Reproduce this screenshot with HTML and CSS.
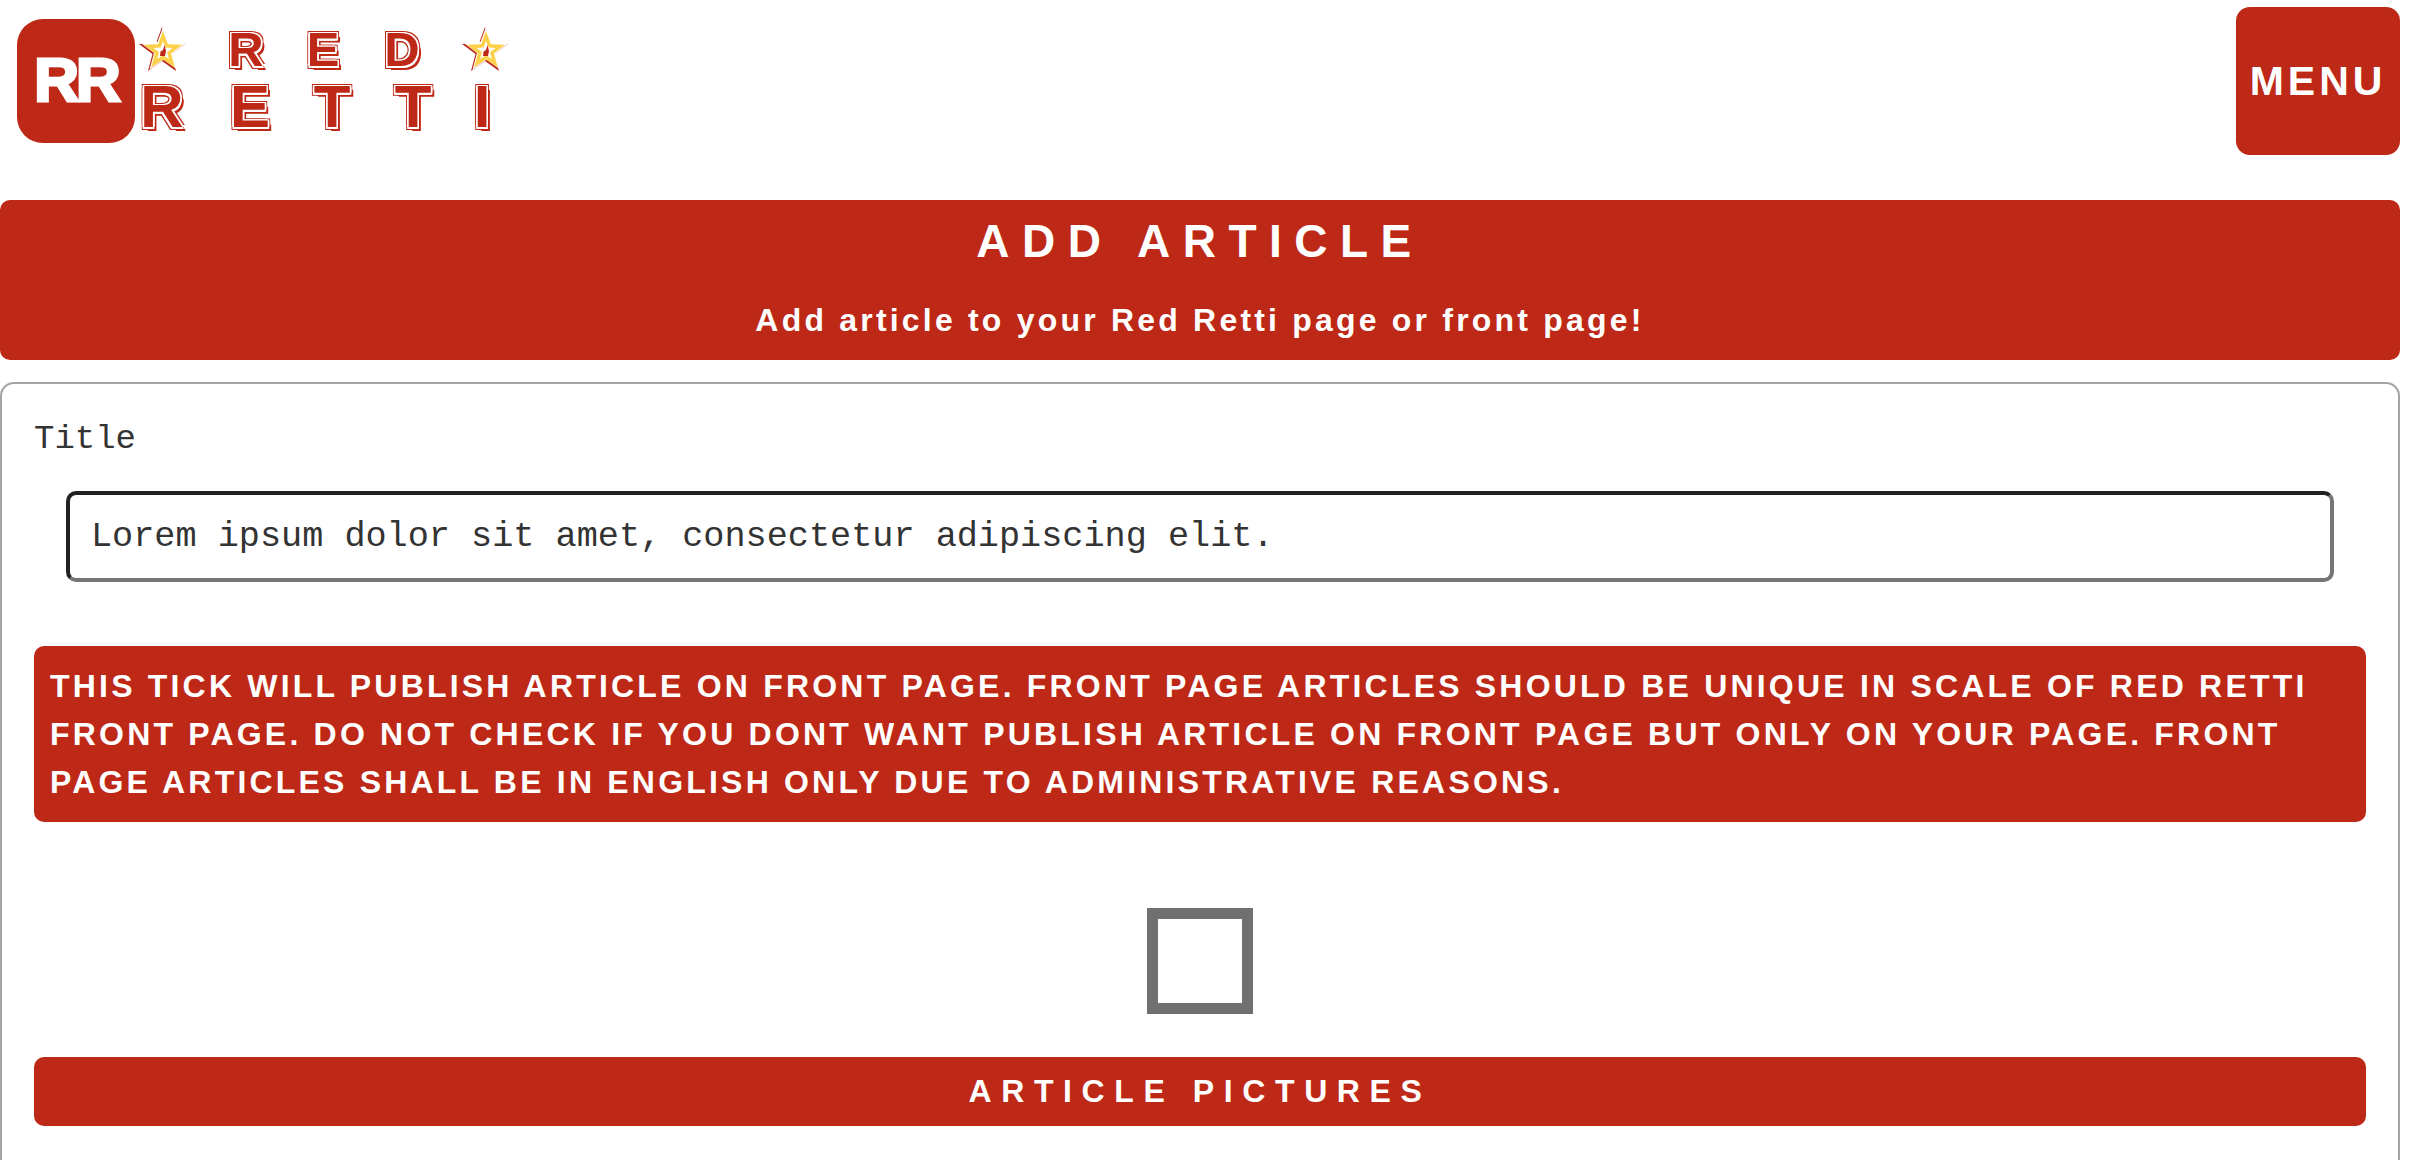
FILE: index.html
```html
<!DOCTYPE html>
<html>
<head>
    <meta charset="UTF-8">
    <meta name="viewport" content="width=device-width, initial-scale=1.0">
    <title>Red Retti - Add article</title>
    <link rel="stylesheet" href="styles.css">
</head>
<body>
    <svg class="defs" width="0" height="0">
        <symbol id="star" viewBox="0 0 50 50">
            <polygon points="25,3 30.9,18.9 48,20 34.5,30.1 39,47 25,37 11,47 15.5,30.1 2,20 19.1,18.9" fill="#be2816"/>
            <polygon points="25,3 30.9,18.9 48,20 34.5,30.1 39,47 25,37 11,47 15.5,30.1 2,20 19.1,18.9" fill="#fff" transform="translate(1.5 -1.2)"/>
            <polygon points="26,7 30.9,20.2 45,20.8 34,29.6 37.8,43.2 26,35.4 14.2,43.2 18,29.6 7,20.8 21.1,20.2" fill="#fdd04a"/>
            <polygon points="26,17 28.5,23.6 35.5,23.9 30,28.3 31.9,35.1 26,31.2 20.1,35.1 22,28.3 16.5,23.9 23.5,23.6" fill="#fff"/>
            <path d="M27.5 21 L29 27 L28 32 L23 32 L23.5 27.5 L26 26 Z" fill="#be2816"/>
        </symbol>
    </svg>

    <header class="topbar">
        <div class="logo">
            <div class="logo-box"><span>RR</span></div>
            <div class="logo-name">
                <div class="name-row row-red">
                    <svg class="star"><use href="#star"/></svg>
                    <span class="small">R</span>
                    <span class="small">E</span>
                    <span class="small">D</span>
                    <svg class="star"><use href="#star"/></svg>
                </div>
                <div class="name-row row-retti">
                    <span class="big">R</span>
                    <span class="big">E</span>
                    <span class="big">T</span>
                    <span class="big">T</span>
                    <span class="big">I</span>
                </div>
            </div>
        </div>
        <button class="menu-btn">MENU</button>
    </header>

    <section class="page-head">
        <h1>ADD ARTICLE</h1>
        <p>Add article to your Red Retti page or front page!</p>
    </section>

    <form class="panel">
        <label class="field-label" for="title">Title</label>
        <input class="title-input" id="title" type="text" value="Lorem ipsum dolor sit amet, consectetur adipiscing elit.">
        <div class="notice">THIS TICK WILL PUBLISH ARTICLE ON FRONT PAGE. FRONT PAGE ARTICLES SHOULD BE UNIQUE IN SCALE OF RED RETTI FRONT PAGE. DO NOT CHECK IF YOU DONT WANT PUBLISH ARTICLE ON FRONT PAGE BUT ONLY ON YOUR PAGE. FRONT PAGE ARTICLES SHALL BE IN ENGLISH ONLY DUE TO ADMINISTRATIVE REASONS.</div>
        <div class="tick-row"><span class="tick"></span></div>
        <h2 class="section-bar">ARTICLE PICTURES</h2>
    </form>
</body>
</html>
```

FILE: styles.css
```css
html, body {
    height: 1160px;
    overflow: hidden;
}

body {
    margin: 0;
    padding-right: 12px;
    background-color: #fff;
    font-family: "Liberation Sans", Arial, sans-serif;
    color: #fff;
}

.defs {
    position: absolute;
}

.topbar {
    display: flex;
    justify-content: space-between;
    align-items: flex-start;
    height: 200px;
    box-sizing: border-box;
    padding-top: 7px;
}

.logo {
    display: flex;
    margin: 12px 0 0 17px;
}

.logo-box {
    display: flex;
    align-items: center;
    justify-content: center;
    width: 118px;
    height: 124px;
    padding-bottom: 3px;
    box-sizing: border-box;
    border-radius: 26px;
    background-color: #be2816;
}

.logo-box span {
    font-size: 62px;
    font-weight: bold;
    letter-spacing: -3px;
    -webkit-text-stroke: 3px #fff;
}

.logo-name {
    margin: 2px 0 0 -13px;
    color: #be2816;
    font-weight: bold;
    line-height: 1;
}

.name-row {
    display: grid;
    height: 56px;
    place-items: center;
}

.row-red {
    grid-template-columns: 80px 88px 66px 92px 74px;
}

.row-retti {
    grid-template-columns: 80px 96px 68px 94px 44px;
}

.small, .big {
    text-shadow:
        1.5px 0 0 #fff, -1.5px 0 0 #fff, 0 1.5px 0 #fff, 0 -1.5px 0 #fff,
        1.5px 1.5px 0 #fff, -1.5px -1.5px 0 #fff, 1.5px -1.5px 0 #fff, -1.5px 1.5px 0 #fff,
        2.5px 2.5px 0 #be2816, 3.5px 3.5px 0 #be2816, -2.5px -2.5px 0 #be2816, 2.5px -2.5px 0 #be2816, -2.5px 2.5px 0 #be2816;
}

.small {
    font-size: 49px;
}

.big {
    font-size: 60px;
}

.star {
    width: 50px;
    height: 50px;
}

.menu-btn {
    width: 164px;
    height: 148px;
    padding: 0;
    border: none;
    border-radius: 14px;
    background-color: #be2816;
    color: #fff;
    font-family: inherit;
    font-size: 41px;
    font-weight: bold;
    letter-spacing: 4px;
}

.page-head {
    height: 160px;
    box-sizing: border-box;
    padding-top: 14px;
    border-radius: 10px;
    background-color: #be2816;
    text-align: center;
}

.page-head h1 {
    margin: 0;
    font-size: 46px;
    line-height: 54px;
    letter-spacing: 12.5px;
}

.page-head p {
    margin: 32px 0 0;
    font-size: 32px;
    font-weight: bold;
    line-height: 40px;
    letter-spacing: 3.2px;
}

.panel {
    display: flex;
    flex-direction: column;
    height: 900px;
    box-sizing: border-box;
    margin-top: 22px;
    padding: 35px 32px 0;
    border: 2px solid #a1a4a8;
    border-radius: 14px;
    font-family: "Liberation Mono", "Courier New", monospace;
    color: #333;
}

.field-label {
    font-size: 34px;
    line-height: 40px;
}

.title-input {
    height: 91px;
    box-sizing: border-box;
    margin: 32px 32px 0;
    padding: 0 21px;
    border: 4px solid;
    border-color: #222 #767676 #767676 #222;
    border-radius: 10px;
    background-color: #fff;
    color: #333;
    font-family: inherit;
    font-size: 35.2px;
    outline: none;
}

.notice {
    margin-top: 64px;
    padding: 16px;
    border-radius: 10px;
    background-color: #be2816;
    color: #fff;
    font-family: "Liberation Sans", Arial, sans-serif;
    font-size: 32px;
    font-weight: bold;
    line-height: 48px;
    letter-spacing: 3.2px;
}

.tick-row {
    display: flex;
    justify-content: center;
    margin-top: 86px;
}

.tick {
    width: 106px;
    height: 106px;
    box-sizing: border-box;
    border: 11px solid #707070;
}

.section-bar {
    height: 69px;
    margin: 43px 0 0;
    border-radius: 10px;
    background-color: #be2816;
    color: #fff;
    font-family: "Liberation Sans", Arial, sans-serif;
    font-size: 32px;
    line-height: 69px;
    letter-spacing: 9.6px;
    text-align: center;
}
```
